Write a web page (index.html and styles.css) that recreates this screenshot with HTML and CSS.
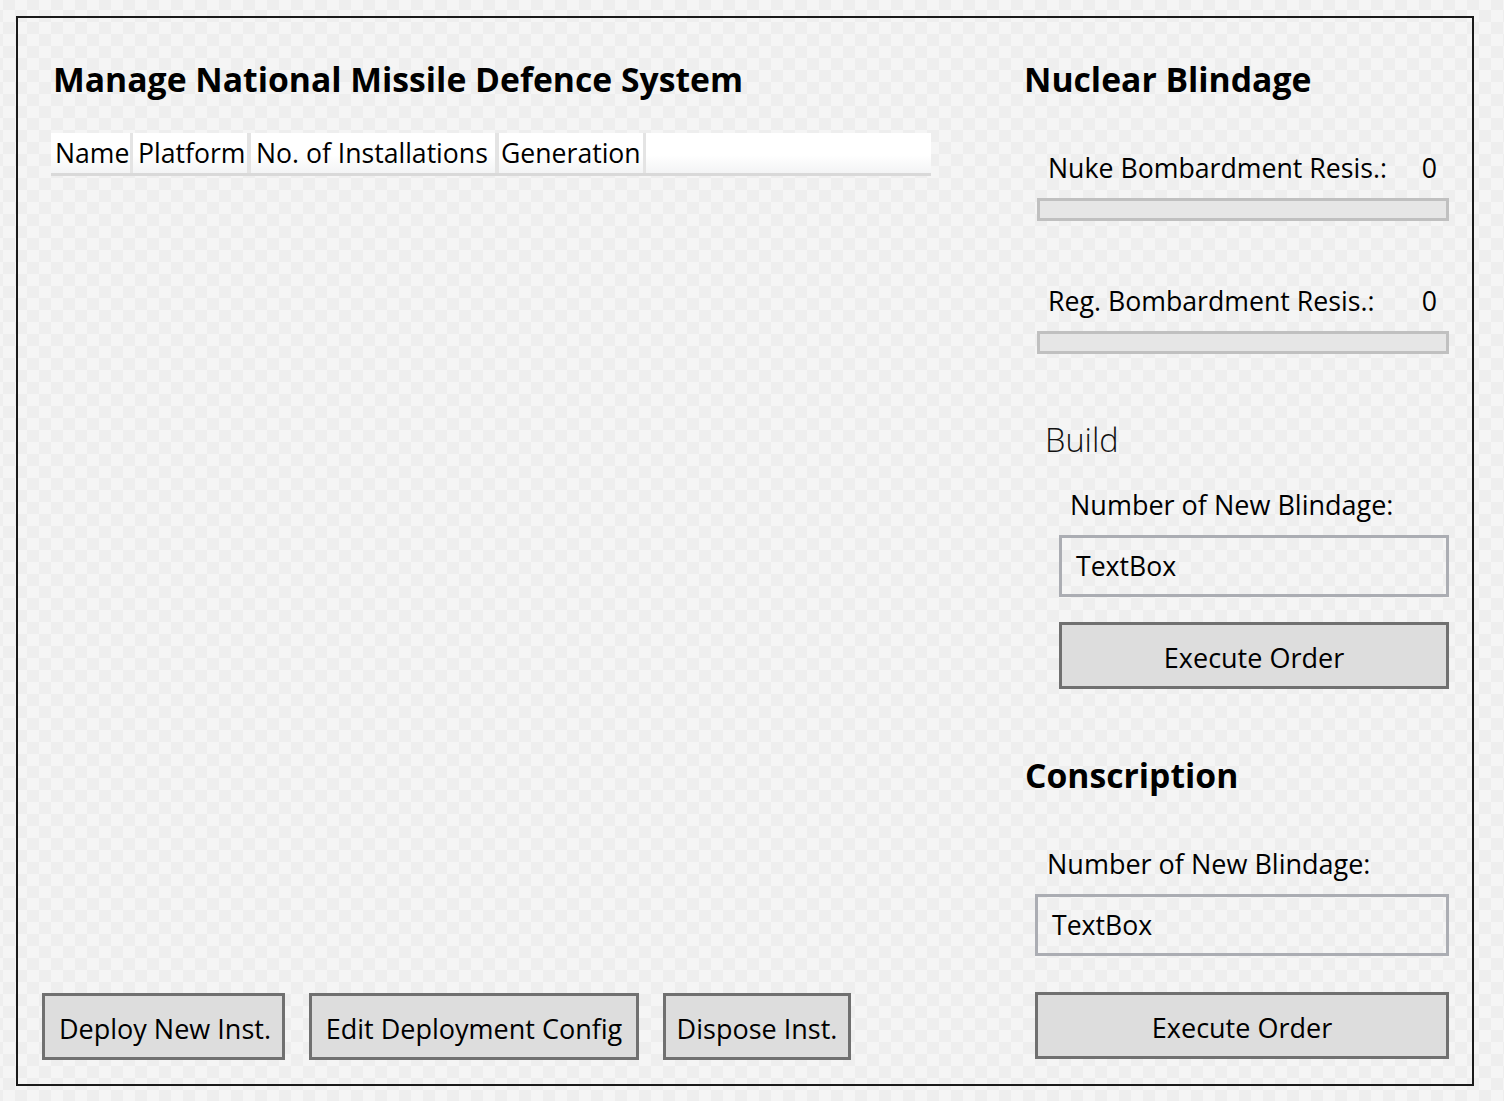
FILE: index.html
```html
<!DOCTYPE html>
<html lang="en">
<head>
<meta charset="utf-8">
<title>Manage National Missile Defence System</title>
<link rel="stylesheet" href="styles.css">
</head>
<body>
<div class="window">
  <section class="left">
    <h1 class="title">Manage National Missile Defence System</h1>
    <div class="grid-header">
      <div class="col col-name">Name</div>
      <div class="col col-platform">Platform</div>
      <div class="col col-inst">No. of Installations</div>
      <div class="col col-gen">Generation</div>
      <div class="col col-fill"></div>
    </div>
    <div class="grid-body"></div>
    <div class="actions">
      <button class="btn btn-deploy">Deploy New Inst.</button>
      <button class="btn btn-edit">Edit Deployment Config</button>
      <button class="btn btn-dispose">Dispose Inst.</button>
    </div>
  </section>
  <section class="right">
    <h2 class="title heading-blindage">Nuclear Blindage</h2>
    <div class="stat stat-nuke"><span>Nuke Bombardment Resis.:</span><span>0</span></div>
    <div class="bar"></div>
    <div class="stat stat-reg"><span>Reg. Bombardment Resis.:</span><span>0</span></div>
    <div class="bar"></div>
    <div class="subhead">Build</div>
    <div class="label label-build">Number of New Blindage:</div>
    <div class="textbox textbox-build">TextBox</div>
    <button class="btn btn-exec btn-exec-build">Execute Order</button>
    <h2 class="title heading-conscription">Conscription</h2>
    <div class="label label-consc">Number of New Blindage:</div>
    <div class="textbox textbox-consc">TextBox</div>
    <button class="btn btn-exec btn-exec-consc">Execute Order</button>
  </section>
</div>
</body>
</html>
```

FILE: styles.css
```css
html {
  background: repeating-conic-gradient(#eeeeee 0 25%, #f5f5f5 0 50%) 3px 10px / 24px 24px;
}

body {
  margin: 16px 0 0 16px;
  font-family: "Open Sans", "Noto Sans", sans-serif;
  color: #000;
}

.window {
  width: 1458px;
  height: 1070px;
  box-sizing: border-box;
  border: 2px solid #1a1a1a;
  display: grid;
  grid-template-columns: 1006px 1fr;
}

.title {
  margin: 0;
  font-size: 33.7px;
  line-height: 40px;
  font-weight: 700;
  white-space: nowrap;
}

/* Left column */
.left {
  display: flex;
  flex-direction: column;
  padding: 41px 0 24px 24px;
  min-width: 0;
}

.left .title {
  margin-left: 11px;
}

.grid-header {
  margin: 34px 0 0 9px;
  width: 880px;
  display: flex;
  background: #e4e4e4;
  border-bottom: 3px solid #d9d9d9;
}

.col {
  box-sizing: border-box;
  height: 40px;
  background: linear-gradient(#ffffff 55%, #f3f4f5);
  font-size: 26.6px;
  line-height: 40px;
  padding-left: 4px;
  white-space: nowrap;
}

.col-name { width: 79px; margin-right: 3px; }
.col-platform { width: 114px; margin-right: 4px; padding-left: 5px; }
.col-inst { width: 244px; margin-right: 4px; padding-left: 5px; }
.col-gen { width: 144px; margin-right: 3px; padding-left: 2px; }
.col-fill { flex: 1; }

.grid-body {
  flex: 1;
}

.actions {
  display: flex;
  gap: 24px;
}

.btn {
  box-sizing: border-box;
  height: 67px;
  border: 3px solid #707070;
  background: #dddddd;
  color: #000;
  font-family: inherit;
  font-size: 27px;
  line-height: 36px;
  padding: 4px 0 0;
  margin: 0;
  display: flex;
  align-items: center;
  justify-content: center;
  white-space: nowrap;
}

.btn-deploy { width: 243px; padding-left: 3px; }
.btn-edit { width: 330px; }
.btn-dispose { width: 188px; }

/* Right column */
.right {
  display: flex;
  flex-direction: column;
  padding: 41px 23px 0 0;
}

.stat {
  display: flex;
  justify-content: space-between;
  font-size: 26.7px;
  line-height: 36px;
  margin: 0 12px 0 24px;
  white-space: nowrap;
}

.stat-nuke { margin-top: 51px; }
.stat-reg { margin-top: 62px; }

.bar {
  box-sizing: border-box;
  height: 23px;
  margin: 12px 0 0 13px;
  border: 3px solid #c0c0c0;
  background: #e6e6e6;
}

.subhead {
  margin: 66px 0 0 21px;
  font-size: 32.5px;
  line-height: 40px;
  font-weight: 300;
  color: #111;
}

.label {
  font-size: 27px;
  line-height: 36px;
  white-space: nowrap;
}

.label-build { margin: 27px 0 0 46px; }
.label-consc { margin: 51px 0 0 23px; }

.textbox {
  box-sizing: border-box;
  height: 62px;
  margin-top: 12px;
  border: 3px solid #abadb3;
  font-size: 26.6px;
  line-height: 56px;
  padding-left: 14px;
}

.textbox-build { margin-left: 35px; }
.textbox-consc { margin-left: 11px; }

.btn-exec-build { margin: 25px 0 0 35px; }
.btn-exec-consc { margin: 36px 0 0 11px; }

.heading-conscription {
  margin: 66px 0 0 1px;
}
```
